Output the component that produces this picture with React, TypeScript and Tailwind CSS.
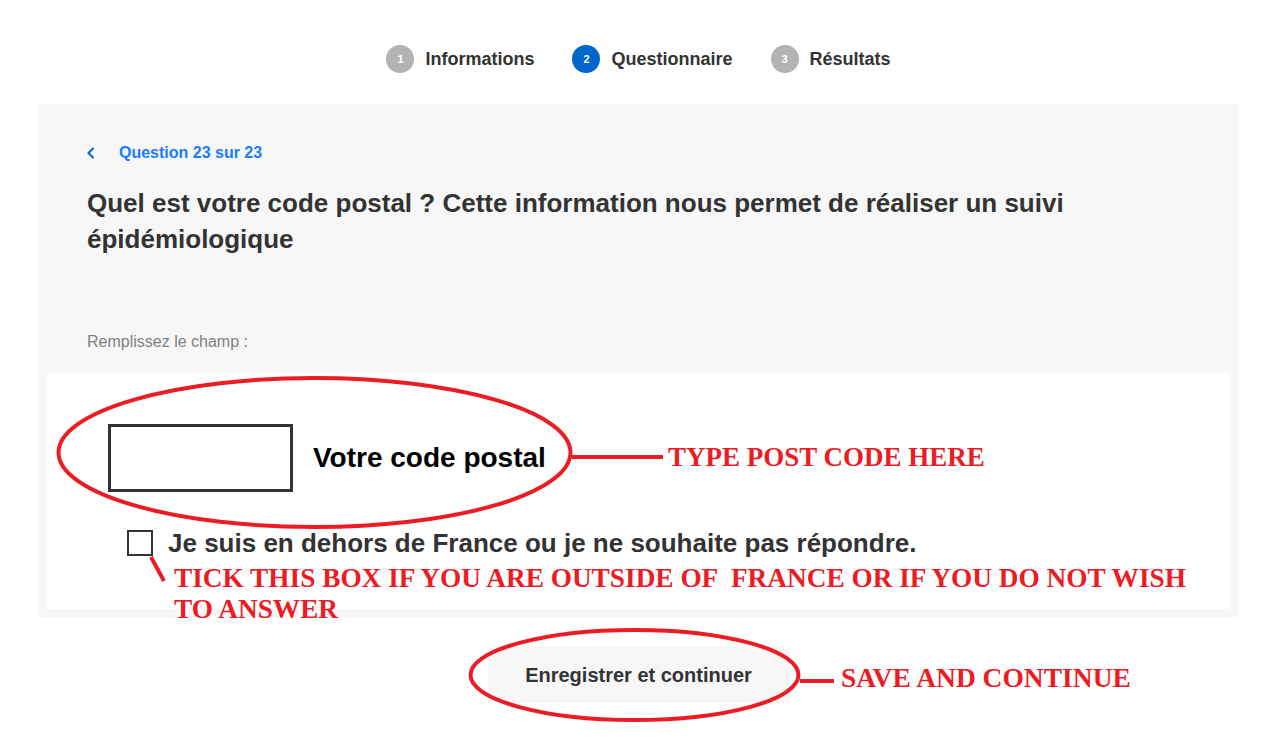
import React, { useState } from 'react';

const steps = [
  { n: 1, label: 'Informations', active: false },
  { n: 2, label: 'Questionnaire', active: true },
  { n: 3, label: 'Résultats', active: false },
];

const Annotations: React.FC = () => (
  <>
    <svg className="absolute left-0 top-0 pointer-events-none" width="1287" height="741" fill="none">
      <ellipse cx="314.5" cy="452.5" rx="256" ry="74.5" stroke="#ec1c24" strokeWidth="4" />
      <line x1="572" y1="457" x2="663" y2="457" stroke="#ec1c24" strokeWidth="4" />
      <line x1="151" y1="557" x2="164" y2="581" stroke="#ec1c24" strokeWidth="4" />
      <ellipse cx="634.5" cy="675" rx="164" ry="45" stroke="#ec1c24" strokeWidth="4" />
      <line x1="800" y1="681" x2="834" y2="681" stroke="#ec1c24" strokeWidth="4" />
    </svg>
    <div className="absolute left-[668px] top-[442px] text-[27px] leading-[30px] font-bold text-[#ec1c24] font-['Liberation_Serif','Times_New_Roman',serif] whitespace-nowrap">
      TYPE POST CODE HERE
    </div>
    <div className="absolute left-[174px] top-[563px] w-[1060px] text-[27.3px] leading-[31px] font-bold text-[#ec1c24] font-['Liberation_Serif','Times_New_Roman',serif] whitespace-pre-wrap">
      {'TICK THIS BOX IF YOU ARE OUTSIDE OF  FRANCE OR IF YOU DO NOT WISH\nTO ANSWER'}
    </div>
    <div className="absolute left-[841px] top-[663px] text-[27.5px] leading-[30px] font-bold text-[#ec1c24] font-['Liberation_Serif','Times_New_Roman',serif] whitespace-nowrap">
      SAVE AND CONTINUE
    </div>
  </>
);

const App: React.FC = () => {
  const [code, setCode] = useState('');
  const [outside, setOutside] = useState(false);

  return (
    <div className="relative min-h-screen bg-white font-['Liberation_Sans',Arial,sans-serif] text-[#333]">
      {/* stepper */}
      <div className="ml-[39px] flex w-[1199px] justify-center gap-[38px] pt-[45px]">
        {steps.map((s) => (
          <div key={s.n} className="flex items-center gap-[11px]">
            <span
              className={`flex h-[28px] w-[28px] items-center justify-center rounded-full text-[11px] font-bold text-white ${s.active ? 'bg-[#0066cc]' : 'bg-[#b3b3b3]'}`}
            >
              {s.n}
            </span>
            <span className="text-[18px] font-bold leading-[28px] text-[#333]">{s.label}</span>
          </div>
        ))}
      </div>

      {/* question panel */}
      <div className="ml-[39px] mt-[31px] w-[1199px] bg-[#f7f7f7] px-[8px] pb-[8px] pt-[40px]">
        <div className="px-[40px]">
          <button className="flex items-center gap-[22px] text-[#1a7cff]">
            <svg width="12" height="14" viewBox="0 0 12 14" fill="none" className="ml-[-2px]">
              <path d="M8 2.5 3.5 7 8 11.5" stroke="#0a6fd6" strokeWidth="2.2" strokeLinecap="round" strokeLinejoin="round" />
            </svg>
            <span className="text-[16px] font-bold leading-[18px]">Question 23 sur 23</span>
          </button>
          <h1 className="mt-[23px] text-[26px] font-bold leading-[36px] text-[#333]">
            Quel est votre code postal ? Cette information nous permet de réaliser un suivi épidémiologique
          </h1>
          <p className="mt-[75px] text-[16px] leading-[20px] text-[#808080]">Remplissez le champ :</p>
        </div>

        <div className="mt-[21px] h-[236px] bg-white pl-[61px] pt-[51px]">
          <div className="flex items-center gap-[20px]">
            <input
              value={code}
              onChange={(e) => setCode(e.target.value)}
              className="h-[68px] w-[185px] border-[3px] border-[#333] bg-white px-3 text-[22px] outline-none"
            />
            <label className="text-[28px] font-bold text-black">Votre code postal</label>
          </div>
          <label className="ml-[19px] mt-[36px] flex items-center gap-[15px]">
            <input
              type="checkbox"
              checked={outside}
              onChange={(e) => setOutside(e.target.checked)}
              className="h-[26px] w-[26px] appearance-none border-2 border-[#333] bg-white checked:bg-[#333]"
            />
            <span className="text-[26px] font-bold leading-[30px] text-[#333]">
              Je suis en dehors de France ou je ne souhaite pas répondre.
            </span>
          </label>
        </div>
      </div>

      {/* submit */}
      <div className="ml-[39px] flex w-[1199px] justify-center pt-[30px]">
        <button className="h-[56px] w-[302px] rounded-[4px] bg-[#f7f7f7] text-[20px] font-bold text-[#333]">
          Enregistrer et continuer
        </button>
      </div>

      <Annotations />
    </div>
  );
};

export default App;
